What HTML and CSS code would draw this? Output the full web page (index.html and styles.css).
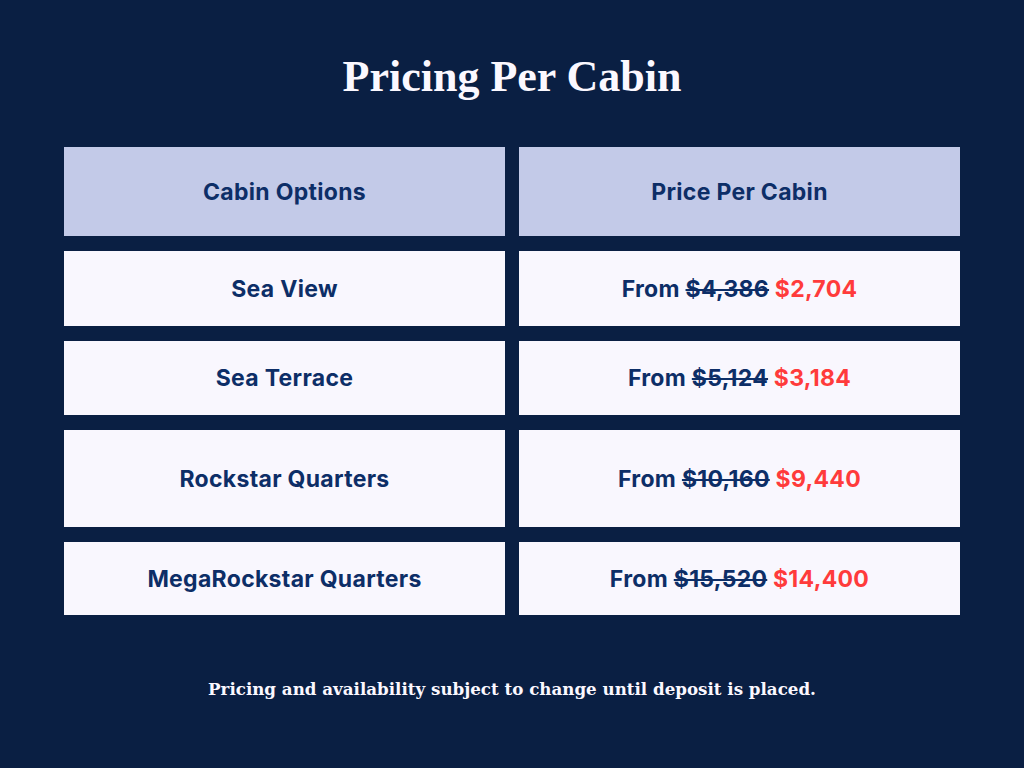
FILE: index.html
```html
<!DOCTYPE html>
<html>
<head>
<meta charset="utf-8">
<link rel="stylesheet" href="styles.css">
</head>
<body>
<div class="page">
  <h1 class="title">Pricing Per Cabin</h1>
  <div class="table">
    <div class="cell head"><span>Cabin Options</span></div>
    <div class="cell head"><span>Price Per Cabin</span></div>
    <div class="cell"><span>Sea View</span></div>
    <div class="cell"><span>From <s>$4,386</s> <span class="sale">$2,704</span></span></div>
    <div class="cell"><span>Sea Terrace</span></div>
    <div class="cell"><span>From <s>$5,124</s> <span class="sale">$3,184</span></span></div>
    <div class="cell"><span>Rockstar Quarters</span></div>
    <div class="cell"><span>From <s>$10,160</s> <span class="sale">$9,440</span></span></div>
    <div class="cell"><span>MegaRockstar Quarters</span></div>
    <div class="cell"><span>From <s>$15,520</s> <span class="sale">$14,400</span></span></div>
  </div>
  <p class="note">Pricing and availability subject to change until deposit is placed.</p>
</div>
</body>
</html>
```
FILE: styles.css
```css
html, body {
  margin: 0;
  padding: 0;
  background: #0a1f43;
}
.page {
  width: 1024px;
  height: 768px;
  box-sizing: border-box;
  padding-top: 52px;
  display: flex;
  flex-direction: column;
  align-items: center;
}
.title {
  margin: 0;
  font-family: "Liberation Serif", "DejaVu Serif", serif;
  font-weight: bold;
  font-size: 44px;
  line-height: 50px;
  color: #fbf8ff;
}
.table {
  margin-top: 45px;
  width: 896px;
  display: grid;
  grid-template-columns: 441px 441px;
  grid-template-rows: 89px 75px 74px 97px 73px;
  column-gap: 14px;
  row-gap: 15px;
}
.cell {
  display: flex;
  align-items: center;
  justify-content: center;
  background: #f9f7fe;
  color: #0d2e67;
  font-family: "Inter", "Open Sans", sans-serif;
  font-weight: 700;
  font-size: 23px;
  letter-spacing: 0.3px;
  white-space: pre;
}
.cell.head {
  background: #c3cae8;
}
.cell s {
  text-decoration-thickness: 2px;
}
.sale {
  color: #ff3b3b;
}
.note {
  margin: 64px 0 0 0;
  font-family: "DejaVu Serif", "Liberation Serif", serif;
  font-weight: bold;
  font-size: 16.7px;
  color: #fbf8ff;
}
```
